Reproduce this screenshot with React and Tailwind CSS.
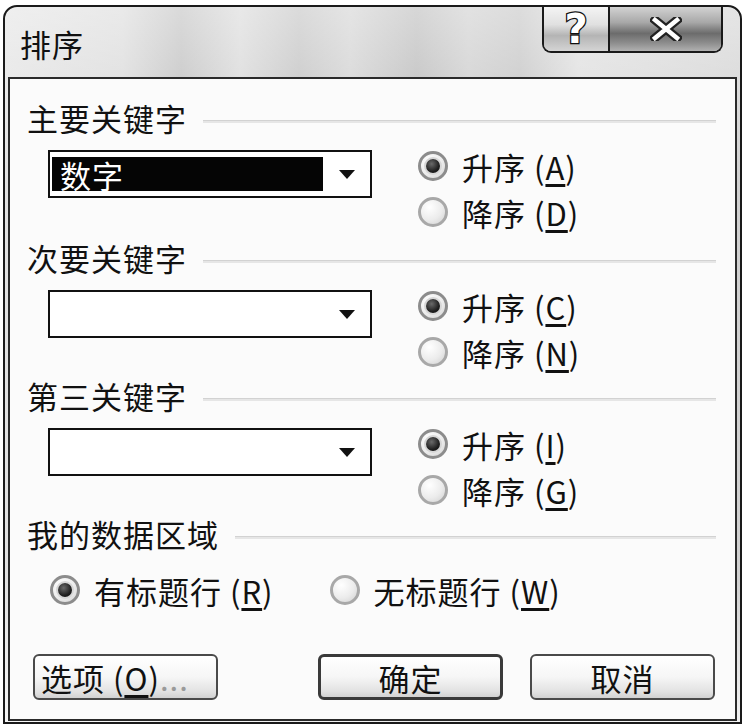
import React from 'react';

const font = "font-['Noto_Sans_CJK_SC','Noto_Sans_CJK_JP',sans-serif]";

const Radio = ({ checked }) => (
  <span
    className={`flex h-[30px] w-[30px] shrink-0 items-center justify-center rounded-full border-[3px] ${
      checked ? 'border-[#8c8c8c]' : 'border-[#a8a8a8]'
    } bg-[radial-gradient(circle_at_35%_30%,#ffffff_0%,#ececec_55%,#cfcfcf_100%)]`}
  >
    {checked && (
      <span className="h-[14px] w-[14px] rounded-full bg-[radial-gradient(circle_at_40%_35%,#6a6a6a_0%,#202020_60%,#0a0a0a_100%)] shadow-[0_0_0_2px_#d6d6d6]" />
    )}
  </span>
);

const RadioItem = ({ checked, label, hotkey }) => (
  <div className="flex h-[46px] items-center gap-[14px]">
    <Radio checked={checked} />
    <span className="text-[31px] leading-none tracking-[1px] text-[#111]">
      {label} (<span className="underline underline-offset-4">{hotkey}</span>)
    </span>
  </div>
);

const Arrow = () => (
  <svg width="16" height="9" viewBox="0 0 16 9" className="shrink-0">
    <polygon points="0,0 16,0 8,9" fill="#111" />
  </svg>
);

const GroupLabel = ({ text }) => (
  <div className="flex h-[36px] items-center">
    <span className="text-[31px] leading-none tracking-[1px] text-[#111]">{text}</span>
    <div className="ml-[16px] mt-[8px] h-[3px] flex-1 border-t border-[#d2d2d2] bg-[#e6e6e6]" />
  </div>
);

const KeySection = ({ label, value, up, down, className }) => (
  <div className={className}>
    <GroupLabel text={label} />
    <div className="flex items-start">
      <div className="ml-[21px] mt-[15px] flex h-[48px] w-[324px] items-center border-2 border-[#111] bg-white pr-[15px]">
        {value ? (
          <div className="ml-[2px] flex h-[34px] w-[271px] items-center bg-[#050505] pl-[8px] text-[31px] leading-none tracking-[1px] text-white">
            {value}
          </div>
        ) : null}
        <div className="ml-auto">
          <Arrow />
        </div>
      </div>
      <div className="ml-[46px] mt-[8px] flex flex-col">
        <RadioItem checked label="升序" hotkey={up} />
        <RadioItem label="降序" hotkey={down} />
      </div>
    </div>
  </div>
);

const DlgButton = ({ children, primary, className }) => (
  <button
    type="button"
    className={`flex h-[46px] w-[185px] items-center rounded-[6px] bg-[linear-gradient(180deg,#ffffff_0%,#f6f6f6_50%,#e2e2e2_85%,#d2d2d2_100%)] text-[31px] leading-none tracking-[1px] text-[#111] ${
      primary ? 'border-[3px] border-[#3a3a3a]' : 'border-2 border-[#4a4a4a]'
    } ${className || ''}`}
  >
    {children}
  </button>
);

const App = () => {
  return (
    <div className={`h-[726px] w-[745px] bg-white pl-[3px] pt-[5px] ${font}`}>
      <div className="flex h-[719px] w-[739px] flex-col overflow-hidden rounded-t-[14px] border-2 border-[#1a1a1a] bg-[linear-gradient(180deg,rgba(255,255,255,0.45)_0%,rgba(255,255,255,0)_25%,rgba(255,255,255,0)_80%,rgba(255,255,255,0.7)_100%),linear-gradient(90deg,#e2e2e2_0%,#d8d8d8_16%,#bcbcbc_24%,#d6d6d6_32%,#bebebe_40%,#cfcfcf_47%,#b6b6b6_56%,#cacaca_63%,#c0c0c0_70%,#dcdcdc_78%,#d0d0d0_100%)]">
        {/* title bar */}
        <div className="flex h-[70px] shrink-0 items-start">
          <span className="self-center pl-[15px] pt-[2px] text-[31px] leading-none tracking-[1px] text-[#111]">排序</span>
          <div className="ml-auto mr-[17px] flex h-[46px] overflow-hidden rounded-b-[9px] border-x-2 border-b-2 border-[#1a1a1a]">
            <div className="flex w-[64px] items-center justify-center bg-[linear-gradient(180deg,#f4f4f4_0%,#e0e0e0_40%,#b4b4b4_65%,#d4d4d4_100%)]">
              <span className="font-['DejaVu_Sans',sans-serif] text-[40px] font-bold leading-none text-white [-webkit-text-stroke:2.5px_#111] [paint-order:stroke]">?</span>
            </div>
            <div className="flex w-[113px] items-center justify-center border-l-2 border-[#1a1a1a] bg-[linear-gradient(180deg,#d2d2d2_0%,#a8a8a8_35%,#6c6c6c_60%,#8a8a8a_80%,#b0b0b0_100%)]">
              <svg width="32" height="24" viewBox="0 0 32 24">
                <path d="M5 3 L27 21 M27 3 L5 21" stroke="#222" strokeWidth="9" strokeLinecap="square" />
                <path d="M5 3 L27 21 M27 3 L5 21" stroke="#fff" strokeWidth="4.5" strokeLinecap="square" />
              </svg>
            </div>
          </div>
        </div>

        {/* client area */}
        <div className="mx-[3px] mb-[1px] flex flex-1 flex-col border-2 border-[#2a2a2a] bg-[#fbfbfb] pl-[17px] pr-[19px] pt-[20px]">
          <KeySection label="主要关键字" value="数字" up="A" down="D" />
          <KeySection label="次要关键字" up="C" down="N" className="mt-[4px]" />
          <KeySection label="第三关键字" up="I" down="G" className="mt-[2px]" />

          <div className="mt-[2px]">
            <GroupLabel text="我的数据区域" />
          </div>
          <div className="mt-[16px] flex h-[46px] items-center">
            <div className="ml-[23px] flex items-center gap-[14px]">
              <Radio checked />
              <span className="text-[31px] leading-none tracking-[1px] text-[#111]">
                有标题行 (<span className="underline underline-offset-4">R</span>)
              </span>
            </div>
            <div className="ml-[56px] flex items-center gap-[14px]">
              <Radio />
              <span className="text-[31px] leading-none tracking-[1px] text-[#111]">
                无标题行 (<span className="underline underline-offset-4">W</span>)
              </span>
            </div>
          </div>

          <div className="mt-[41px] flex items-center">
            <DlgButton className="ml-[6px] justify-start pl-[6px]">
              选项 (<span className="underline underline-offset-4">O</span>)<span className="text-[#9a9a9a]">...</span>
            </DlgButton>
            <DlgButton primary className="ml-auto justify-center">确定</DlgButton>
            <DlgButton className="ml-[27px] mr-[1px] justify-center">取消</DlgButton>
          </div>
        </div>
      </div>
    </div>
  );
};

export default App;
